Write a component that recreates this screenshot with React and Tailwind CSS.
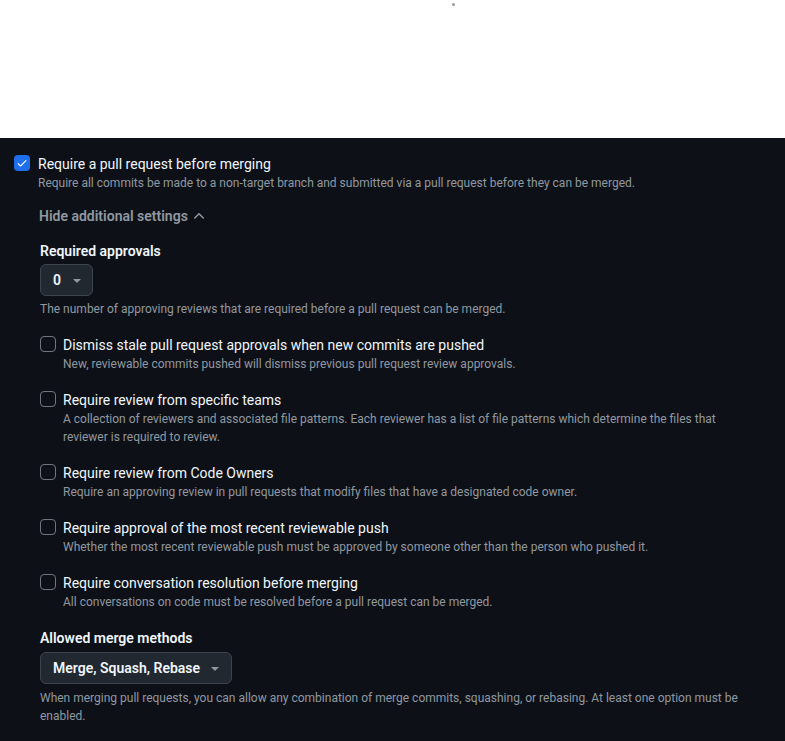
import React from "react";

function Caret() {
  return (
    <svg width="16" height="16" viewBox="0 0 16 16" className="fill-[#9198a1]">
      <path d="m4.427 7.427 3.396 3.396a.25.25 0 0 0 .354 0l3.396-3.396A.25.25 0 0 0 11.396 7H4.604a.25.25 0 0 0-.177.427Z" />
    </svg>
  );
}

function ChevronUp() {
  return (
    <svg width="16" height="16" viewBox="0 0 16 16" className="fill-[#9198a1]">
      <path d="M3.22 10.53a.749.749 0 0 1 0-1.06l4.25-4.25a.749.749 0 0 1 1.06 0l4.25 4.25a.749.749 0 1 1-1.06 1.06L8 6.811 4.28 10.53a.749.749 0 0 1-1.06 0Z" />
    </svg>
  );
}

function Option({ title, desc }) {
  return (
    <div className="flex gap-[7px]">
      <div className="w-4 h-4 mt-[1px] flex-shrink-0 rounded-[4px] border border-[#6e7681]" />
      <div>
        <div className="text-sm leading-5 text-[#f0f6fc]">{title}</div>
        <div className="text-xs leading-[18px] text-[#9198a1]">{desc}</div>
      </div>
    </div>
  );
}

export default function App() {
  const options = [
    {
      title: "Dismiss stale pull request approvals when new commits are pushed",
      desc: "New, reviewable commits pushed will dismiss previous pull request review approvals.",
    },
    {
      title: "Require review from specific teams",
      desc: "A collection of reviewers and associated file patterns. Each reviewer has a list of file patterns which determine the files that reviewer is required to review.",
    },
    {
      title: "Require review from Code Owners",
      desc: "Require an approving review in pull requests that modify files that have a designated code owner.",
    },
    {
      title: "Require approval of the most recent reviewable push",
      desc: "Whether the most recent reviewable push must be approved by someone other than the person who pushed it.",
    },
    {
      title: "Require conversation resolution before merging",
      desc: "All conversations on code must be resolved before a pull request can be merged.",
    },
  ];

  return (
    <div className="w-[785px] h-[741px] overflow-hidden bg-white font-['Roboto',sans-serif]">
      {/* top blank area */}
      <div className="h-[138px] flex justify-center">
        <div className="ml-[121px] mt-[3px] w-[3px] h-[3px] rounded-full bg-[#9a9a9a]" />
      </div>

      <div className="h-[603px] bg-[#0d1117] pl-[14px] pr-[40px] pt-[16px]">
        {/* main checkbox */}
        <div className="flex gap-2">
          <div className="w-4 h-4 mt-[1px] flex-shrink-0 rounded-[4px] bg-[#1f6feb] flex items-center justify-center">
            <svg width="12" height="12" viewBox="0 0 16 16" className="fill-white">
              <path d="M13.78 4.22a.75.75 0 0 1 0 1.06l-7.25 7.25a.75.75 0 0 1-1.06 0L2.22 9.28a.751.751 0 0 1 .018-1.042.751.751 0 0 1 1.042-.018L6 10.94l6.72-6.72a.75.75 0 0 1 1.06 0Z" />
            </svg>
          </div>
          <div>
            <div className="text-sm leading-5 text-[#f0f6fc]">Require a pull request before merging</div>
            <div className="text-xs leading-[18px] text-[#9198a1]">
              Require all commits be made to a non-target branch and submitted via a pull request before they can be merged.
            </div>
          </div>
        </div>

        <div className="pl-[26px]">
          <div className="mt-[14px] flex items-center gap-[3px] text-sm font-semibold text-[#9198a1] leading-5">
            <span className="-ml-[1px]">Hide additional settings</span>
            <ChevronUp />
          </div>

          <div className="mt-[15px] text-sm font-semibold leading-5 text-[#f0f6fc]">Required approvals</div>
          <button className="mt-[3px] h-8 w-[53px] rounded-md border border-[#3d444d] bg-[#212830] flex items-center gap-[8px] pl-3 text-sm font-semibold text-[#f0f6fc]">
            0
            <Caret />
          </button>
          <div className="mt-[4px] text-xs leading-[18px] text-[#9198a1]">
            The number of approving reviews that are required before a pull request can be merged.
          </div>

          <div className="mt-[17px] flex flex-col gap-[17px]">
            {options.map((o) => (
              <Option key={o.title} {...o} />
            ))}
          </div>

          <div className="mt-[17px] text-sm font-semibold leading-5 text-[#f0f6fc]">Allowed merge methods</div>
          <button className="mt-[4px] h-8 rounded-md border border-[#3d444d] bg-[#212830] flex items-center gap-[7px] pl-3 pr-[8px] whitespace-nowrap text-sm font-semibold text-[#f0f6fc]">
            Merge, Squash, Rebase
            <Caret />
          </button>
          <div className="mt-[5px] text-xs leading-[18px] text-[#9198a1]">
            When merging pull requests, you can allow any combination of merge commits, squashing, or rebasing. At least one option must be enabled.
          </div>
        </div>
      </div>
    </div>
  );
}
